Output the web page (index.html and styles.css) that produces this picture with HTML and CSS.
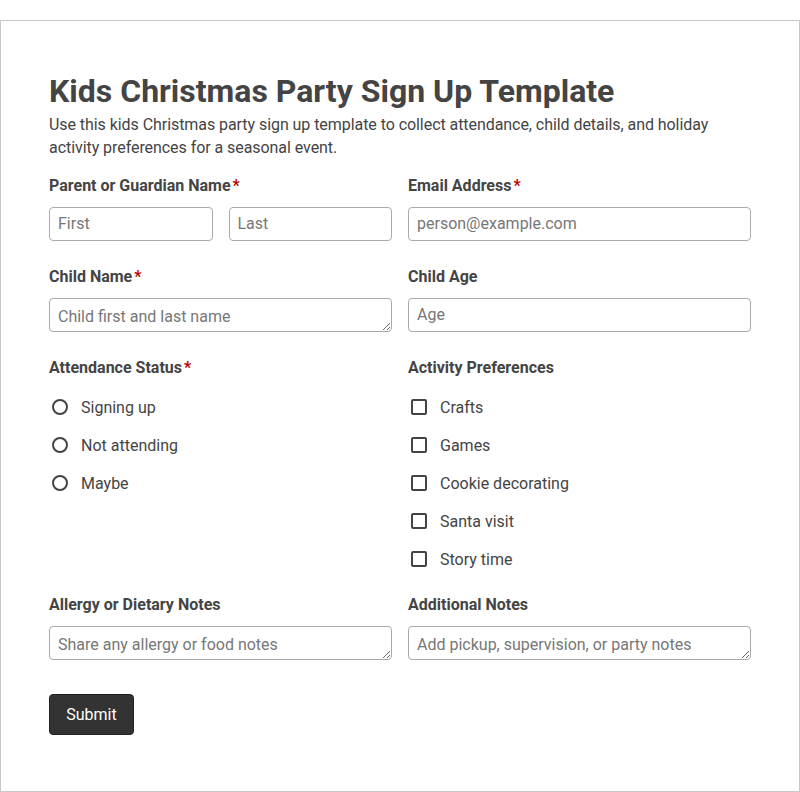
FILE: index.html
```html
<!DOCTYPE html>
<html lang="en">
<head>
  <meta charset="UTF-8">
  <meta name="viewport" content="width=device-width, initial-scale=1.0">
  <title>Kids Christmas Party Sign Up Template</title>
  <link rel="stylesheet" href="styles.css">
</head>
<body>
  <form class="signup">
    <h1 class="title">Kids Christmas Party Sign Up Template</h1>
    <p class="intro">Use this kids Christmas party sign up template to collect attendance, child details, and holiday activity preferences for a seasonal event.</p>

    <div class="grid">
      <div class="field">
        <label class="label">Parent or Guardian Name<span class="req">*</span></label>
        <div class="pair">
          <input class="input" type="text" placeholder="First">
          <input class="input" type="text" placeholder="Last">
        </div>
      </div>
      <div class="field">
        <label class="label">Email Address<span class="req">*</span></label>
        <input class="input" type="email" placeholder="person@example.com">
      </div>

      <div class="field">
        <label class="label">Child Name<span class="req">*</span></label>
        <textarea class="input area" rows="1" placeholder="Child first and last name"></textarea>
      </div>
      <div class="field">
        <label class="label">Child Age</label>
        <input class="input" type="text" placeholder="Age">
      </div>

      <div class="field">
        <span class="label">Attendance Status<span class="req">*</span></span>
        <div class="options">
          <label class="option"><input type="radio" name="status" class="radio"> Signing up</label>
          <label class="option"><input type="radio" name="status" class="radio"> Not attending</label>
          <label class="option"><input type="radio" name="status" class="radio"> Maybe</label>
        </div>
      </div>
      <div class="field">
        <span class="label">Activity Preferences</span>
        <div class="options">
          <label class="option"><input type="checkbox" class="check"> Crafts</label>
          <label class="option"><input type="checkbox" class="check"> Games</label>
          <label class="option"><input type="checkbox" class="check"> Cookie decorating</label>
          <label class="option"><input type="checkbox" class="check"> Santa visit</label>
          <label class="option"><input type="checkbox" class="check"> Story time</label>
        </div>
      </div>

      <div class="field">
        <label class="label">Allergy or Dietary Notes</label>
        <textarea class="input area" rows="1" placeholder="Share any allergy or food notes"></textarea>
      </div>
      <div class="field">
        <label class="label">Additional Notes</label>
        <textarea class="input area" rows="1" placeholder="Add pickup, supervision, or party notes"></textarea>
      </div>
    </div>

    <div class="actions">
      <button type="button" class="submit">Submit</button>
    </div>
  </form>
</body>
</html>
```

FILE: styles.css
```css
* {
  box-sizing: border-box;
}

body {
  margin: 0;
  padding-top: 20px;
  background: #fff;
  font-family: Roboto, "Noto Sans", Arial, sans-serif;
  color: #444;
}

.signup {
  width: 800px;
  height: 772px;
  border: 1px solid #c8c8c8;
  padding: 50px 48px 48px;
}

.title {
  margin: 0;
  font-size: 32px;
  line-height: 40px;
  font-weight: 700;
  color: #444;
}

.intro {
  margin: 2px 0 17px;
  font-size: 16px;
  line-height: 23px;
  letter-spacing: -0.06px;
  color: #444;
}

.grid {
  display: grid;
  grid-template-columns: 1fr 1fr;
  column-gap: 16px;
  row-gap: 26px;
}

.field {
  display: flex;
  flex-direction: column;
}

.label {
  display: block;
  font-size: 16px;
  line-height: 20px;
  font-weight: 700;
  margin-bottom: 11px;
  color: #444;
}

.req {
  color: #b00;
  margin-left: 2px;
}

.pair {
  display: flex;
  gap: 16px;
}

.pair .input {
  flex: 1;
  min-width: 0;
}

.input {
  display: block;
  width: 100%;
  height: 34px;
  padding: 5px 8px 7px;
  border: 1px solid #aaa;
  border-radius: 4px;
  font-family: inherit;
  font-size: 16px;
  line-height: 20px;
  color: #444;
  background: #fff;
}

.input::placeholder {
  color: #777;
}

.area {
  padding: 8px 8px 4px;
  resize: vertical;
  overflow: hidden;
}

.options {
  display: flex;
  flex-direction: column;
  gap: 16px;
  margin-top: 7px;
  margin-bottom: -1px;
}

.option {
  display: flex;
  align-items: center;
  gap: 13px;
  height: 22px;
  font-size: 16px;
  color: #444;
}

.radio,
.check {
  appearance: none;
  -webkit-appearance: none;
  width: 16px;
  height: 16px;
  margin: 0 0 0 3px;
  border: 2px solid #444;
  background: #fff;
}

.radio {
  border-radius: 50%;
}

.check {
  border-radius: 2px;
}

.actions {
  margin-top: 34px;
}

.submit {
  width: 85px;
  height: 41px;
  padding: 0;
  border: 1px solid #222;
  border-radius: 4px;
  background: #333;
  color: #fff;
  font-family: inherit;
  font-size: 16px;
}
```
